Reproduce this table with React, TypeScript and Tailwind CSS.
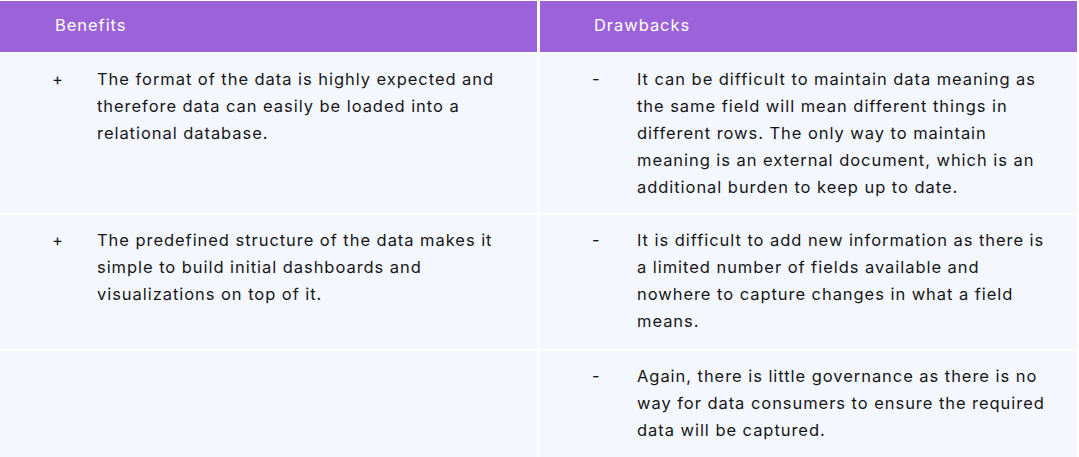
const rows: { pro?: string; con: string }[] = [
  {
    pro: 'The format of the data is highly expected and therefore data can easily be loaded into a relational database.',
    con: 'It can be difficult to maintain data meaning as the same field will mean different things in different rows. The only way to maintain meaning is an external document, which is an additional burden to keep up to date.',
  },
  {
    pro: 'The predefined structure of the data makes it simple to build initial dashboards and visualizations on top of it.',
    con: 'It is difficult to add new information as there is a limited number of fields available and nowhere to capture changes in what a field means.',
  },
  {
    con: 'Again, there is little governance as there is no way for data consumers to ensure the required data will be captured.',
  },
]

function Cell({ mark, text }: { mark?: string; text?: string }) {
  return (
    <div className="bg-[#f4f7fe] pl-[52px] pr-6 pt-[12px]">
      {text && (
        <div className="flex">
          <span className="w-[45px] shrink-0">{mark}</span>
          <p className="max-w-[419px]">{text}</p>
        </div>
      )}
    </div>
  )
}

export default function App() {
  return (
    <div
      className="h-[457px] w-[1079px] overflow-hidden bg-white pt-px pr-[2px] text-[16.5px] leading-[27px] tracking-[0.95px] text-[#161618]"
      style={{ fontFamily: 'Inter, "Noto Sans", sans-serif' }}
    >
      <div className="grid h-full grid-cols-2 grid-rows-[51px_159px_134px_1fr] gap-x-[3px] gap-y-[2px]">
        <div className="flex items-center bg-[#9c62d9] pb-[3px] pl-[55px] text-white">Benefits</div>
        <div className="flex items-center bg-[#9c62d9] pb-[3px] pl-[54px] text-white">Drawbacks</div>
        {rows.map((r, i) => (
          <>
            <Cell key={`p${i}`} mark="+" text={r.pro} />
            <Cell key={`c${i}`} mark="-" text={r.con} />
          </>
        ))}
      </div>
    </div>
  )
}
